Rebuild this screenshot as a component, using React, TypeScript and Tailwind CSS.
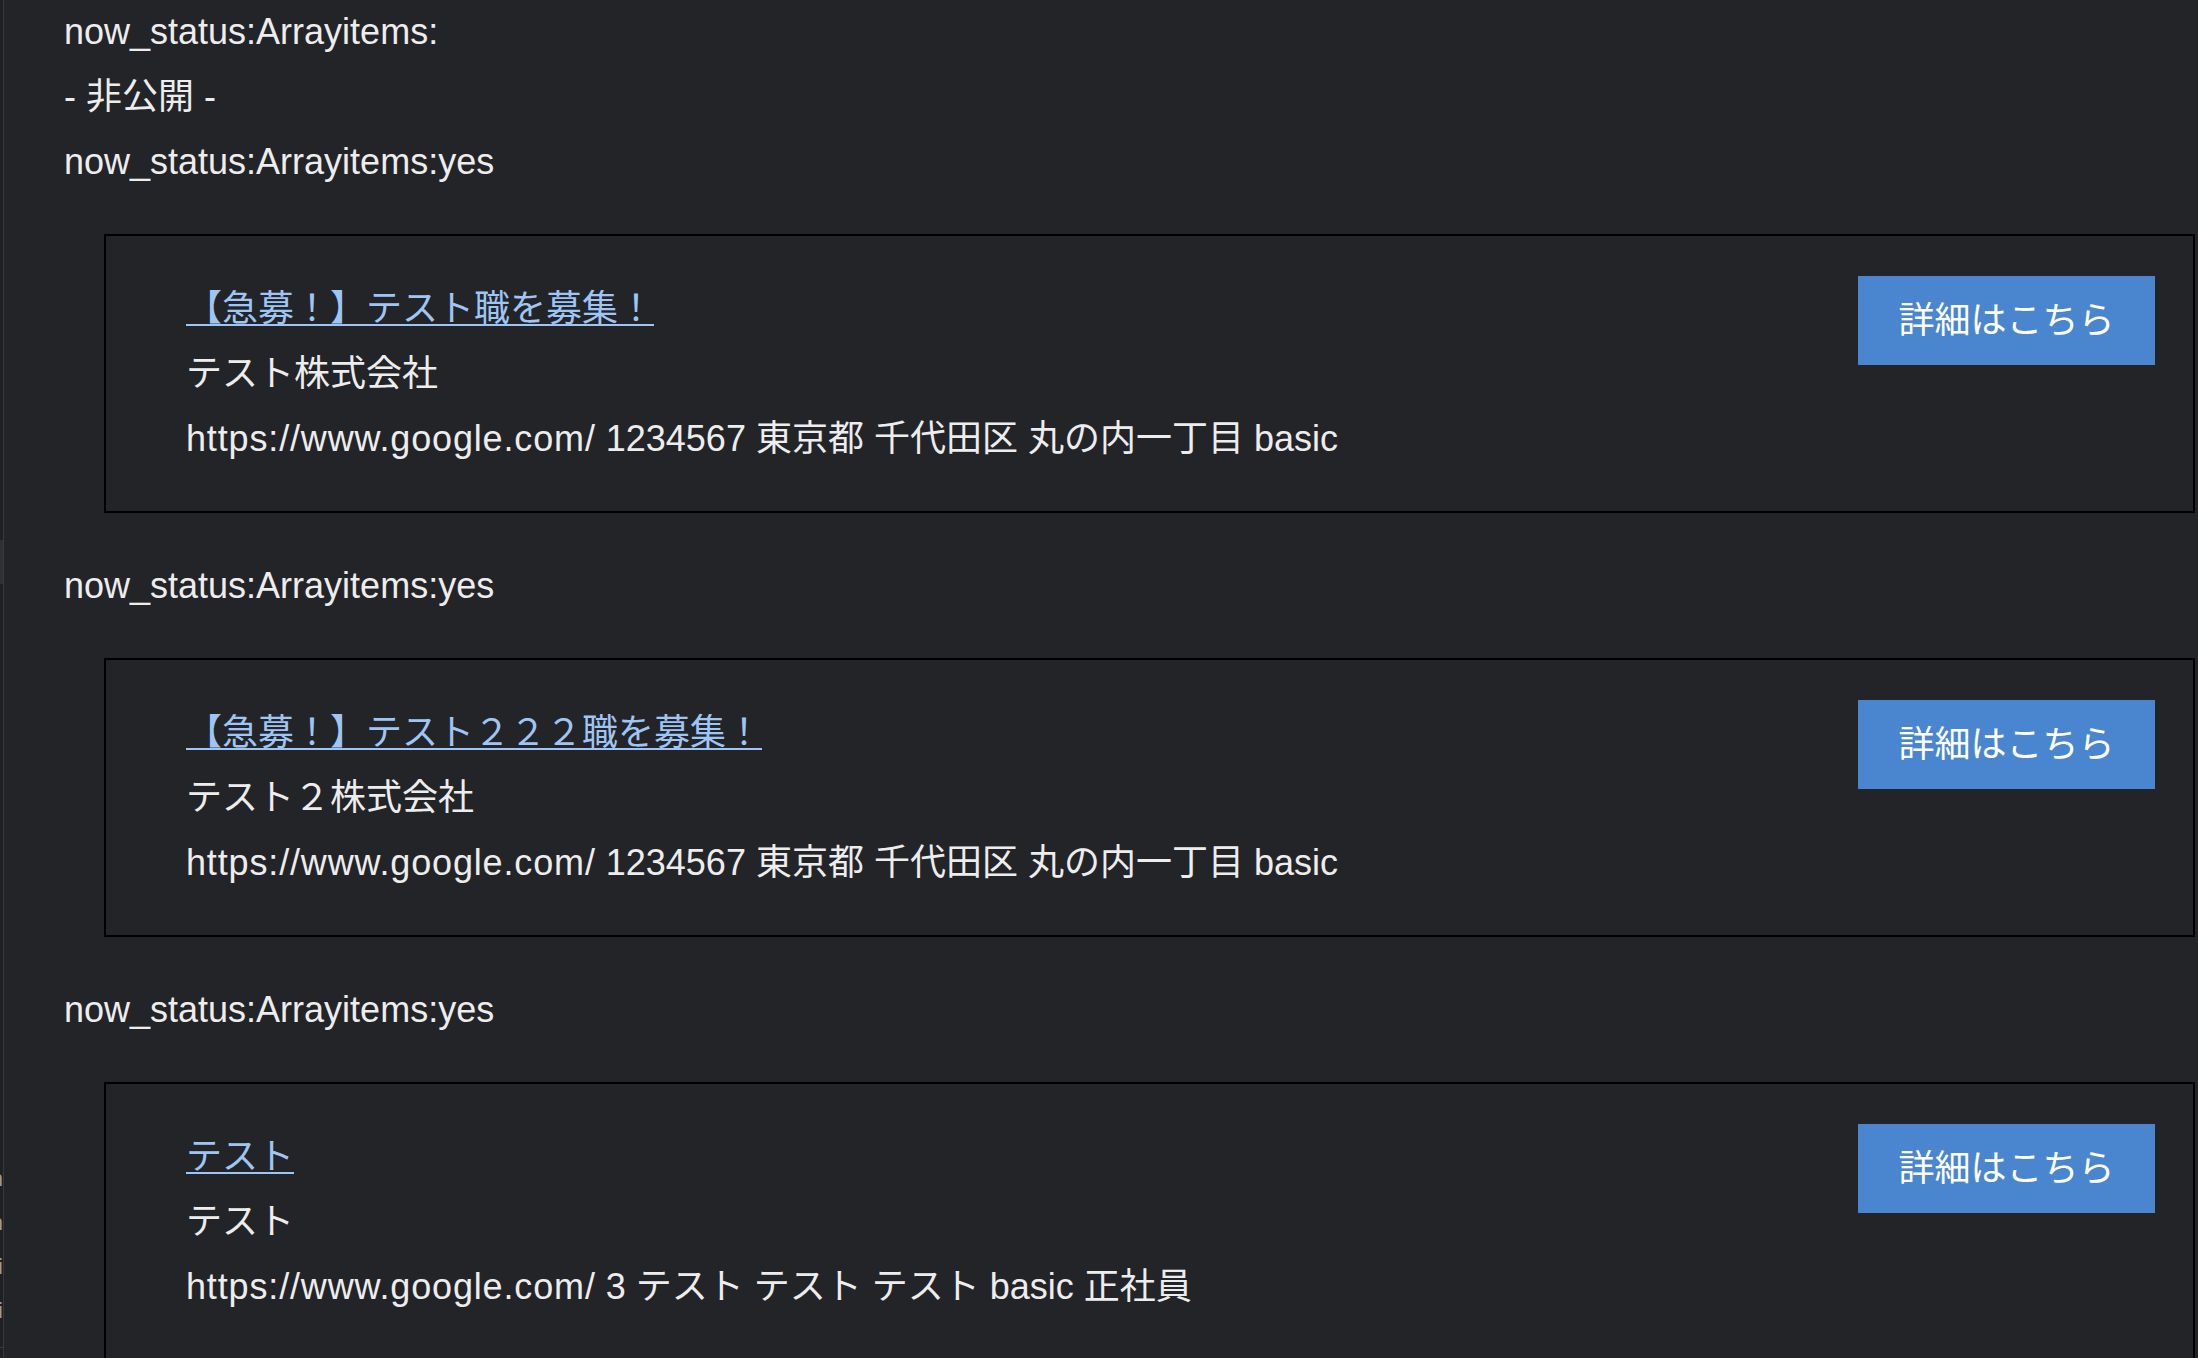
import { Fragment } from "react"

interface Job {
  title: string
  company: string
  url: string
  detail: string
}

const jobs: Job[] = [
  {
    title: "【急募！】テスト職を募集！",
    company: "テスト株式会社",
    url: "https://www.google.com/",
    detail: "1234567 東京都 千代田区 丸の内一丁目 basic",
  },
  {
    title: "【急募！】テスト２２２職を募集！",
    company: "テスト２株式会社",
    url: "https://www.google.com/",
    detail: "1234567 東京都 千代田区 丸の内一丁目 basic",
  },
  {
    title: "テスト",
    company: "テスト",
    url: "https://www.google.com/",
    detail: "3 テスト テスト テスト basic 正社員",
  },
]

const JobCard = ({ title, company, url, detail }: Job) => {
  return (
    <div className="my-[40px] ml-[40px] flex items-start justify-between border-2 border-black py-[40px] pl-[80px] pr-[38px]">
      <div className="flex flex-col">
        <a href="#" className="self-start text-[#9fc5f4] underline decoration-[2px] underline-offset-[3px]">
          {title}
        </a>
        <p>{company}</p>
        <p className="whitespace-nowrap">
          <span className="tracking-[0.85px]">{url}</span> {detail}
        </p>
      </div>
      <a
        href="#"
        className="flex h-[89px] w-[297px] shrink-0 items-center justify-center bg-[#4a86cf] leading-none text-white"
      >
        詳細はこちら
      </a>
    </div>
  )
}

export default function App() {
  return (
    <div className="flex min-h-screen bg-[#232428] font-['Liberation_Sans','Noto_Sans_CJK_JP',sans-serif]">
      {/* clipped neighbouring pane on the left edge */}
      <div className="flex w-[4px] shrink-0 flex-col items-end overflow-hidden border-r border-[#38393d] bg-[#1f2023] text-[22px] leading-[44px] text-[#9a9a9a]">
        <div className="h-[540px] w-full shrink-0" />
        <div className="h-[44px] w-full shrink-0 bg-[#2f3034]" />
        <div className="h-[573px] w-full shrink-0" />
        <span className="whitespace-nowrap">n</span>
        <span className="whitespace-nowrap">n</span>
        <span className="whitespace-nowrap">i</span>
        <span className="whitespace-nowrap">i</span>
        <div className="h-[14px] w-full shrink-0" />
        <div className="h-px w-full shrink-0 bg-[#3a3b3f]" />
      </div>

      <main className="-mt-px min-w-0 flex-1 pl-[60px] pr-[3px] text-[36px] leading-[65px] text-[#ededed]">
        <p>now_status:Arrayitems:</p>
        <p>- 非公開 -</p>
        {jobs.map((job, i) => (
          <Fragment key={i}>
            <p>now_status:Arrayitems:yes</p>
            <JobCard {...job} />
          </Fragment>
        ))}
      </main>
    </div>
  )
}
